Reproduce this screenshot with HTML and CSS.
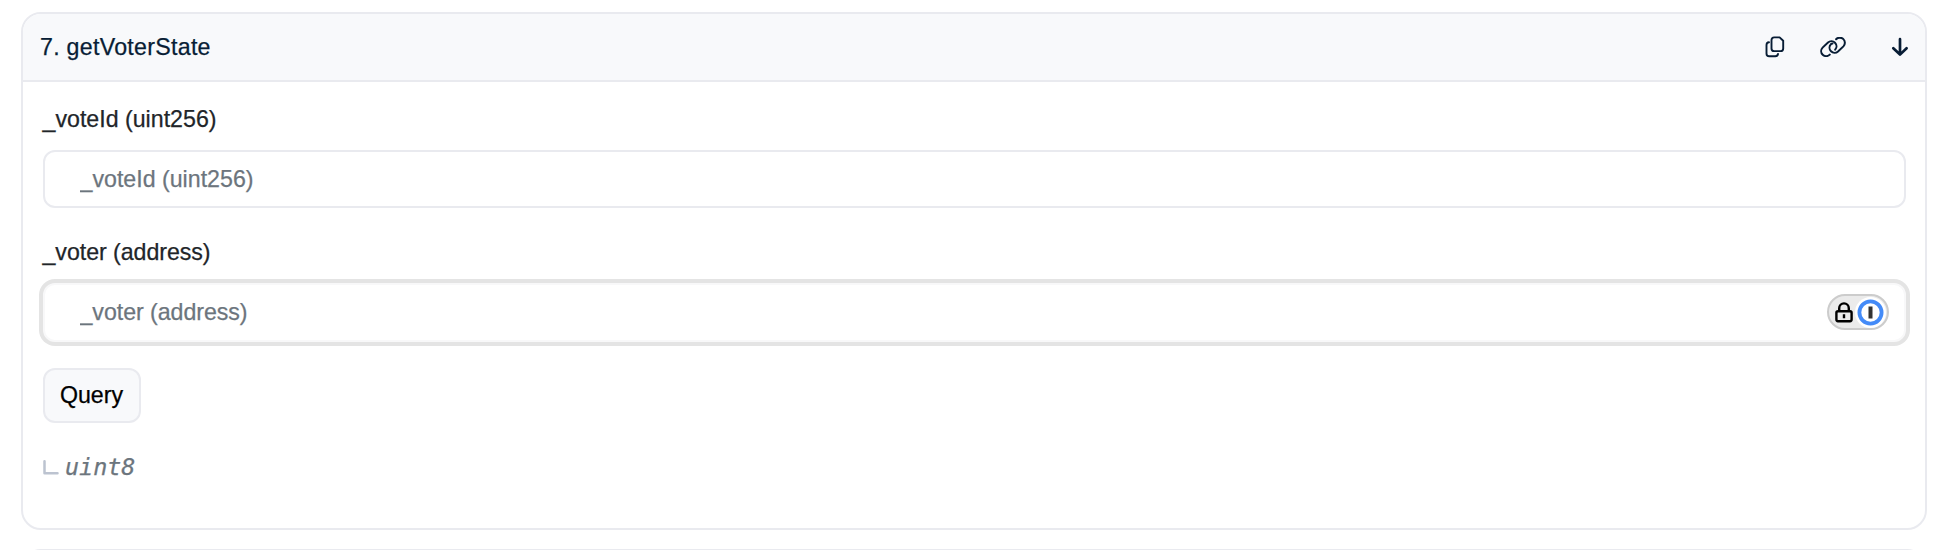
FILE: index.html
```html
<!DOCTYPE html>
<html lang="en">
<head>
<meta charset="utf-8">
<title>getVoterState</title>
<link rel="stylesheet" href="styles.css">
</head>
<body>
<main class="list">
  <section class="card">
    <header class="card-header">
      <span class="title">7. getVoterState</span>
      <div class="actions">
        <svg class="icon copy" width="20" height="22" viewBox="0 0 20 22" fill="none" stroke="currentColor" stroke-width="1.9" stroke-linecap="round" stroke-linejoin="round"><path d="M9.2 1.4H14.6L18.2 4.8V12.4Q18.2 15.1 15.5 15.1H9.2Q6.5 15.1 6.5 12.4V4.1Q6.5 1.4 9.2 1.4Z"/><path d="M4 6.3Q1.5 6.5 1.5 9V17.4Q1.5 20.2 4.2 20.2H10.3Q12.7 20.2 13 18"/></svg>
        <svg class="icon link" width="26" height="20" viewBox="0 0 26 20" fill="none" stroke="currentColor" stroke-width="2" stroke-linecap="round"><path d="M9.8 17.6A5 5 0 0 1 2.6 10.6L8 5.5A5.1 5.1 0 0 1 15.2 12.7"/><path d="M16.1 2.2A5 5 0 0 1 23.4 9.4L18 14.5A5.1 5.1 0 0 1 10.8 7.3Q11.6 6.5 12.5 6.4"/></svg>
        <svg class="icon arrow" width="18" height="20" viewBox="0 0 18 20" fill="none" stroke="currentColor" stroke-width="2.7" stroke-linecap="round" stroke-linejoin="round"><path d="M9 2.2V17.6M2.3 11.2L9 17.6L15.6 11.2"/></svg>
      </div>
    </header>
    <div class="card-body">
      <label class="label" for="vote-id">_voteId (uint256)</label>
      <div class="field"><input class="input" id="vote-id" type="text" placeholder="_voteId (uint256)"></div>
      <label class="label second" for="voter">_voter (address)</label>
      <div class="field focused">
        <input class="input" id="voter" type="text" placeholder="_voter (address)">
        <div class="manager">
          <svg class="lock" width="18" height="21" viewBox="0 0 18 21" fill="none" stroke="#000" stroke-width="2.4"><rect x="1.4" y="9.2" width="15.2" height="10" rx="1.6"/><path d="M4.2 9V6.2A4.8 4.8 0 0 1 13.8 6.2V9M9 12.2V16.2"/></svg>
          <svg class="key" width="31" height="31" viewBox="0 0 31 31"><circle cx="15.5" cy="15.5" r="15.5" fill="#fff"/><circle cx="15.5" cy="15.5" r="11.1" fill="#fff" stroke="#448bf8" stroke-width="3.8"/><rect x="13.5" y="9.5" width="4" height="12" fill="#333"/></svg>
        </div>
      </div>
      <button class="query" type="button">Query</button>
      <div class="result">
        <svg class="corner" width="16" height="15" viewBox="0 0 16 15" fill="none" stroke="#bcc3d0" stroke-width="2.5" stroke-linecap="round" stroke-linejoin="round"><path d="M1.5 1.3V13.2H14.5"/></svg>
        <span class="type">uint8</span>
      </div>
    </div>
  </section>
  <section class="card next"></section>
</main>
</body>
</html>
```
FILE: styles.css
```css
* { box-sizing: border-box; }
html, body { height: 100%; }
body {
  margin: 0;
  overflow: hidden;
  background: #fff;
  color: #212529;
  font-family: "Liberation Sans", Arial, sans-serif;
  font-size: 23.2px;
  line-height: 34px;
  -webkit-text-stroke: 0.25px currentColor;
}
.list {
  height: 550px;
  overflow: hidden;
  padding: 12px 19px 0 21px;
}
.card {
  height: 518px;
  border: 2px solid #e9eaef;
  border-radius: 20px;
  overflow: hidden;
}
.next { margin-top: 19px; }
.card-header {
  display: flex;
  align-items: center;
  justify-content: space-between;
  height: 68px;
  padding: 0 16px 0 17px;
  background: #f8f9fb;
  border-bottom: 2px solid #e9eaef;
  color: #081d35;
}
.title { letter-spacing: 0.28px; }
.actions { display: flex; align-items: center; }
.icon { display: block; }
.link { margin-left: 35px; }
.arrow { margin-left: 45px; }
.card-body {
  display: flex;
  flex-direction: column;
  align-items: flex-start;
  padding: 20px 19px 0 20px;
}
.label { height: 48px; margin-left: -0.5px; }
.second { margin-top: 27px; letter-spacing: -0.05px; }
.field {
  display: flex;
  align-items: center;
  width: 100%;
  height: 58px;
  padding: 0 18px 0 34.5px;
  border: 2px solid #e9eaef;
  border-radius: 12px;
  background: #fff;
}
.focused {
  height: 59px;
  padding: 0 15px 1px 34.5px;
  border-color: #f8f8f9;
  box-shadow: 0 0 0 4px #e4e4e4;
}
.input {
  flex: 1;
  min-width: 0;
  padding: 0;
  border: 0;
  outline: 0;
  background: none;
  font: inherit;
}
.focused .input { letter-spacing: -0.05px; }
.input::placeholder { color: #6c757d; opacity: 1; }
.manager {
  display: flex;
  align-items: center;
  justify-content: space-between;
  width: 62px;
  height: 36px;
  padding: 0 1px 0 6px;
  border: 2px solid #ccc;
  border-radius: 18px;
  background: #ebebeb;
}
.query {
  width: 98px;
  height: 55px;
  margin-top: 26px;
  padding: 0 1px 2px 0;
  border: 2px solid #e9eaef;
  border-radius: 12px;
  background: #f8f9fb;
  color: #000;
  font: inherit;
}
.result {
  display: flex;
  align-items: center;
  gap: 6px;
  margin-top: 27px;
}
.type {
  color: #6c757d;
  font-family: "DejaVu Sans Mono", monospace;
  font-size: 23.4px;
  font-style: italic;
}
```
